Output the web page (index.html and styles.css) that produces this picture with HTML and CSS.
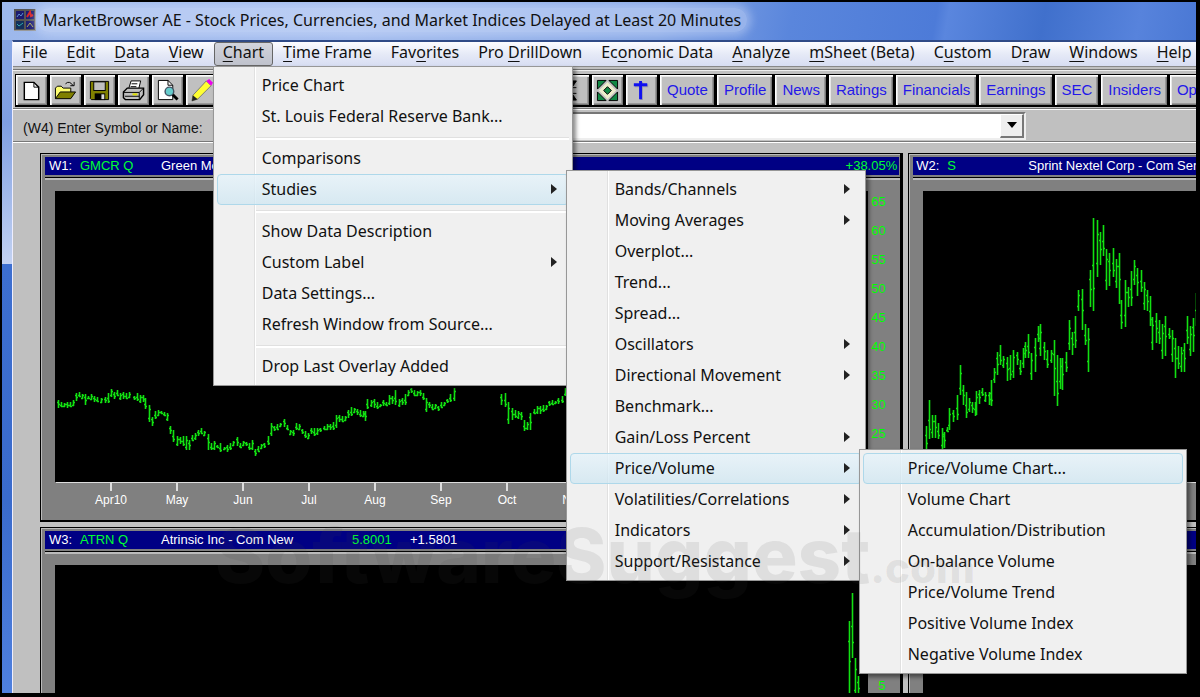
FILE: index.html
```
<!DOCTYPE html>
<html lang="en">
<head>
<meta charset="utf-8">
<title>MarketBrowser AE</title>
<link rel="stylesheet" href="styles.css">
</head>
<body>
<div class="app">
  <header class="titlebar">
    <svg class="app-icon" width="22" height="22" viewBox="0 0 22 22" aria-hidden="true">
      <rect width="22" height="22" fill="#555"/><path d="M0 21.500h22M21.500 0v22" stroke="#999"/>
      <rect x="2" y="2" width="8" height="8" fill="#1b1b70"/><rect x="12" y="2" width="8" height="8" fill="#1b1b70"/><rect x="2" y="12" width="8" height="8" fill="#12305c"/><rect x="12" y="12" width="8" height="8" fill="#1b1b70"/>
      <path d="M3 8l2-3 2 2 2-3" stroke="#5a90d0" fill="none"/><path d="M13 8l3-5 1 4 2-1" stroke="#d22" stroke-width="2" fill="none"/><path d="M3 15l2 2 4-3" stroke="#3aa" fill="none"/><path d="M13 18l3-4 3 4" stroke="#aa5" fill="none"/>
    </svg>
    <h1 class="title">MarketBrowser AE - Stock Prices, Currencies, and Market Indices Delayed at Least 20 Minutes</h1>
  </header>
  <div class="client">
    <nav class="menubar">
      <button class="top"><u>F</u>ile</button>
      <button class="top"><u>E</u>dit</button>
      <button class="top"><u>D</u>ata</button>
      <button class="top"><u>V</u>iew</button>
      <div class="drop">
        <button class="top open"><u>C</u>hart</button>
        <ul class="menu menu-chart">
          <li><button>Price Chart</button></li>
          <li><button>St. Louis Federal Reserve Bank...</button></li>
          <li class="sep"></li>
          <li><button>Comparisons</button></li>
          <li class="active"><button class="more">Studies</button>
            <ul class="menu menu-studies">
              <li><button class="more">Bands/Channels</button></li>
              <li><button class="more">Moving Averages</button></li>
              <li><button>Overplot...</button></li>
              <li><button>Trend...</button></li>
              <li><button>Spread...</button></li>
              <li><button class="more">Oscillators</button></li>
              <li><button class="more">Directional Movement</button></li>
              <li><button>Benchmark...</button></li>
              <li><button class="more">Gain/Loss Percent</button></li>
              <li class="active"><button class="more">Price/Volume</button>
                <ul class="menu menu-volume">
                  <li class="active"><button>Price/Volume Chart...</button></li>
                  <li><button>Volume Chart</button></li>
                  <li><button>Accumulation/Distribution</button></li>
                  <li><button>On-balance Volume</button></li>
                  <li><button>Price/Volume Trend</button></li>
                  <li><button>Positive Volume Index</button></li>
                  <li><button>Negative Volume Index</button></li>
                </ul>
              </li>
              <li><button class="more">Volatilities/Correlations</button></li>
              <li><button class="more">Indicators</button></li>
              <li><button class="more">Support/Resistance</button></li>
            </ul>
          </li>
          <li class="sep"></li>
          <li><button>Show Data Description</button></li>
          <li><button class="more">Custom Label</button></li>
          <li><button>Data Settings...</button></li>
          <li><button>Refresh Window from Source...</button></li>
          <li class="sep"></li>
          <li><button>Drop Last Overlay Added</button></li>
        </ul>
      </div>
      <button class="top"><u>T</u>ime Frame</button>
      <button class="top">Fav<u>o</u>rites</button>
      <button class="top">Pro <u>D</u>rillDown</button>
      <button class="top">Ec<u>o</u>nomic Data</button>
      <button class="top"><u>A</u>nalyze</button>
      <button class="top"><u>m</u>Sheet (Beta)</button>
      <button class="top">C<u>u</u>stom</button>
      <button class="top">D<u>r</u>aw</button>
      <button class="top"><u>W</u>indows</button>
      <button class="top"><u>H</u>elp</button>
    </nav>

    <div class="toolbar">
      <div class="tools">
        <button class="tool" aria-label="New"><svg viewBox="0 0 24 24"><path d="M4.500 3.500h10l5 5v13h-15z" fill="#fff" stroke="#000" stroke-width="1.500"/><path d="M14.500 3.500v5h5" fill="none" stroke="#000"/></svg></button>
        <button class="tool" aria-label="Open"><svg viewBox="0 0 24 24"><path d="M1.500 20.500v-11l2-2h4l2 2h8v4" fill="#ffff70" stroke="#000"/><path d="M1.500 20.500l5-7h16l-5 7z" fill="#808000" stroke="#000"/><path d="M12 5q4-4 8 2m1-4v4h-4" fill="none" stroke="#000"/></svg></button>
        <button class="tool" aria-label="Save"><svg viewBox="0 0 24 24"><path d="M2.500 2.500h19v19h-18l-1-1z" fill="#808000" stroke="#000"/><rect x="6" y="3" width="12" height="9" fill="#c0c0c0" stroke="#000"/><rect x="7" y="15" width="11" height="7" fill="#000"/><rect x="14" y="16" width="3" height="5" fill="#ddd"/></svg></button>
        <button class="tool" aria-label="Print"><svg viewBox="0 0 24 24"><path d="M7 10l2.500-8h10l-2 8" fill="#fff" stroke="#000"/><path d="M10 5h6M9 8h6" stroke="#000"/><path d="M1.500 13.500l4-4h17v7l-4 5h-15l-2-2z" fill="#c0c0c0" stroke="#000" stroke-width="1.500"/><path d="M2 14h16l4-4M18 14v7M3 18h15" stroke="#000" fill="none"/><path d="M11 16h5" stroke="#dd0" stroke-width="2"/></svg></button>
        <button class="tool" aria-label="Print preview"><svg viewBox="0 0 24 24"><path d="M2.500 1.500h10l5 5v15h-15z" fill="#fff" stroke="#000"/><path d="M12.500 1.500v5h5" fill="none" stroke="#000"/><circle cx="14" cy="13" r="4.500" fill="#6cc" stroke="#456" stroke-width="1.500"/><path d="M17.500 16.500l5 5" stroke="#000" stroke-width="3"/></svg></button>
        <button class="tool" aria-label="Edit"><svg viewBox="0 0 24 24"><path d="M3 17L17 2l5 5L8 21l-6 2z" fill="#ff3" stroke="#777"/><path d="M17 2l3-2 4 4-2 3z" fill="#e0e"/><path d="M3 17l5 4-6 2z" fill="#222"/></svg></button>
      </div>
      <div class="tools">
        <button class="tool" aria-label="Compress"><svg viewBox="0 0 24 24"><path d="M6 2h9l-4 6zM6 22h9l-4-6zM9 9h6M9 15h6" fill="#000" stroke="#000"/></svg></button>
        <button class="tool" aria-label="Expand"><svg viewBox="0 0 24 24"><path d="M1.500 1.500h9l-9 9zM22.500 1.500h-9l9 9zM1.500 22.500h9l-9-9zM22.500 22.500h-9l9-9z" fill="#184" stroke="#000"/><path d="M12 3L3 12l9 9 9-9z" fill="#eec"/><path d="M12 8l4 4-4 4-4-4z" fill="#184" stroke="#000"/></svg></button>
        <button class="tool" aria-label="Crosshair"><svg viewBox="0 0 24 24"><path d="M12 3v19M5 7h14" stroke="#99a" stroke-width="3"/><path d="M11 2v19M4 6h14" stroke="#1010f0" stroke-width="3"/></svg></button>
        <button class="tool text">Quote</button>
        <button class="tool text">Profile</button>
        <button class="tool text">News</button>
        <button class="tool text">Ratings</button>
        <button class="tool text">Financials</button>
        <button class="tool text">Earnings</button>
        <button class="tool text">SEC</button>
        <button class="tool text">Insiders</button>
        <button class="tool text">Options</button>
      </div>
    </div>

    <div class="prompt">
      <label for="symbol">(W4) Enter Symbol or Name:</label>
      <div class="combo"><input id="symbol" type="text"><button aria-label="Show list"></button></div>
    </div>

    <main class="workspace">
      <section class="pane">
        <header class="pane-title"><span>W1:</span><span class="green">GMCR Q</span><span>Green Mountain</span><span></span><span></span><span class="green">+38.05%</span></header>
        <div class="body">
          <div class="plot"><svg class="chart" data-chart="w1" data-x="55" data-y="191"></svg></div>
          <div class="scale"><span>65</span><span>60</span><span>55</span><span>50</span><span>45</span><span>40</span><span>35</span><span>30</span><span>25</span></div>
        </div>
        <footer class="months"><span>Apr10</span><span>May</span><span>Jun</span><span>Jul</span><span>Aug</span><span>Sep</span><span>Oct</span><span>Nov</span></footer>
      </section>
      <section class="pane">
        <header class="pane-title"><span>W2:</span><span class="green">S</span><span>Sprint Nextel Corp - Com Ser</span></header>
        <div class="body"><div class="plot"><svg class="chart" data-chart="w2" data-x="922" data-y="191"></svg></div></div>
        <footer class="months"></footer>
      </section>
      <section class="pane">
        <header class="pane-title"><span>W3:</span><span class="green">ATRN Q</span><span>Atrinsic Inc - Com New</span><span class="green">5.8001</span><span>+1.5801</span></header>
        <div class="body">
          <div class="plot"><svg class="chart" data-chart="w3" data-x="55" data-y="565"></svg></div>
          <div class="scale low"><span>5</span></div>
        </div>
      </section>
      <section class="pane">
        <header class="pane-title"><span>W4:</span></header>
        <div class="body"><div class="plot"></div></div>
      </section>
    </main>
  </div>
  <div class="watermark">SoftwareSuggest<small>.com</small></div>
</div>
<script src="chart.js"></script>
</body>
</html>
```
FILE: styles.css
```
* { box-sizing: border-box; }
body {
  margin: 0;
  height: 100vh;
  padding: 2px 4px 4px 2px;
  background: #000;
  font: 16px/24px "Noto Sans", "Open Sans", sans-serif;
  color: #111;
}
button { font: inherit; color: inherit; background: none; border: 0; padding: 0; margin: 0; }

.app {
  position: relative;
  height: 100%;
  overflow: hidden;
  display: flex;
  flex-direction: column;
  padding-left: 10px;
  background: linear-gradient(#8aa8e4 0, #7f9fe2 120px, #c3d2f2 262px, #3d6fd0 262px, #3a6bcc 500px, #4f80de 100%);
}
.titlebar {
  display: flex;
  align-items: center;
  gap: 8px;
  height: 38px;
  flex: none;
  margin-left: -10px;
  padding: 0 0 2px 12px;
  background: linear-gradient(100deg, #9db8ec 0, #a3bcee 30%, #86a7e6 55%, #5a86dc 66%, #4d7bd8 78%, #5a86de 79%, #4070cc 87%, #5783dc 95%, #4a78d4 100%);
}
.title {
  margin: 0;
  font-size: 16px;
  font-weight: 400;
  white-space: nowrap;
  padding: 0 6px;
  margin-left: -7px;
  border-radius: 12px;
  background: rgba(220, 230, 252, .4);
  box-shadow: 0 0 8px 4px rgba(220, 230, 252, .4);
}
.client {
  flex: 1;
  min-height: 0;
  display: flex;
  flex-direction: column;
  border-top: 2px solid #2f4a86;
  border-left: 1px solid #eef;
  background: #c0c0c0;
}

.menubar {
  display: flex;
  gap: 1px;
  height: 25px;
  flex: none;
  border-bottom: 1px solid #888;
  background: linear-gradient(#fcfcff, #e6eaf7 50%, #d7ddf2);
  white-space: nowrap;
}
.top { display: block; height: 24px; padding: 0 8px 3px; line-height: 19px; border: 1px solid transparent; }
.top u { text-underline-offset: 3px; }
.top.open { border-color: #666; border-radius: 3px; background: linear-gradient(#d2d4dc, #bfc2cc); }
.drop { position: relative; z-index: 10; }

.menu {
  position: absolute;
  list-style: none;
  margin: 0;
  padding: 3px;
  border: 1px solid #979797;
  background: linear-gradient(90deg, transparent 37px, #e0e0e0 37px, #e0e0e0 38px, #fff 38px, #fff 39px, transparent 39px) 3px 0 no-repeat, #f0f0f0;
  box-shadow: 3px 3px 4px rgba(0, 0, 0, .45);
}
.menu-chart { left: -1px; top: 100%; width: 360px; }
.menu .menu { left: calc(100% - 3px); top: -4px; z-index: 1; }
.menu-studies { width: 300px; }
.menu .menu-volume { width: 328px; }
.menu li { position: relative; height: 31px; }
.menu li > button {
  display: block;
  width: 100%;
  height: 31px;
  padding-left: 44px;
  line-height: 29px;
  text-align: left;
  border: 1px solid transparent;
  border-radius: 4px;
}
.menu li.active > button { border-color: #aed8ea; background: linear-gradient(rgba(230, 243, 250, .8), rgba(205, 230, 242, .7)); }
.menu li.sep { height: 11px; }
.menu li.sep::before { content: ""; position: absolute; left: 39px; right: 0; top: 5px; height: 2px; background: #fff; border-top: 1px solid #e0e0e0; }
.more::after {
  content: "";
  position: absolute;
  right: 12px;
  top: 10px;
  border: 5px solid transparent;
  border-left: 6px solid #222;
  border-right: 0;
}

.toolbar {
  display: flex;
  height: 40px;
  flex: none;
  margin-top: 2px;
  padding: 4px 0 0 2px;
  border-top: 1px solid #777;
  border-bottom: 1px solid #777;
  box-shadow: inset 0 1px #eee;
}
.tools { display: flex; flex: none; }
.tools + .tools { margin-left: 338px; }
.tool {
  flex: none;
  width: 34px;
  height: 33px;
  padding: 2px;
  border: 1px solid #000;
  border-width: 1px 2px 2px 1px;
  background: #c0c0c0;
  box-shadow: inset 1px 1px #fff, inset 2px 2px #e8e8e8, inset -1px -1px #777, inset -2px -2px #999;
}
.tool svg { display: block; width: 23px; height: 23px; margin: 0 auto; }
.tool.text { width: auto; padding: 0 6px 0 7px; font: 15px/28px "Liberation Sans", Arial, sans-serif; color: #2418e8; }

.prompt {
  display: flex;
  align-items: center;
  height: 33px;
  flex: none;
  padding-left: 10px;
  border-top: 1px solid #fff;
  border-bottom: 1px solid #777;
  font: 14px/20px "Liberation Sans", Arial, sans-serif;
}
.prompt label { width: 192px; padding-top: 4px; white-space: nowrap; }
.combo { display: flex; width: 811px; height: 28px; border: 2px solid #777; border-right-color: #eee; border-bottom-color: #eee; background: #fff; }
.combo input { flex: 1; min-width: 0; border: 0; padding: 0 4px; background: #fff; }
.combo button { width: 24px; background: #eee; border: 1px solid #fff; border-right: 2px solid #777; border-bottom: 2px solid #777; }
.combo button::before { content: ""; display: block; width: 0; margin: 0 auto; border: 5px solid transparent; border-top: 6px solid #000; border-bottom: 0; }

.workspace {
  flex: 1;
  min-height: 0;
  display: grid;
  grid-template: minmax(0, 20fr) minmax(0, 9fr) / minmax(0, 3fr) minmax(0, 1fr);
  gap: 5px;
  padding: 10px 0 0 27px;
  border-top: 1px solid #fff;
  font: 12px/18px "Liberation Sans", Arial, sans-serif;
  color: #fff;
}
.pane {
  display: flex;
  flex-direction: column;
  overflow: hidden;
  background: #808080;
  border: 1px solid #000;
  border-right-width: 3px;
  border-bottom-width: 2px;
  box-shadow: inset 1px 1px #bbb;
}
.pane:nth-child(2n) { border-right: 0; }
.pane:nth-child(n+3) { border-bottom: 0; }
.pane-title {
  display: grid;
  grid-template-columns: 31px 81px 191px 58px minmax(0, 1fr) auto;
  flex: none;
  height: 18px;
  margin: 3px 1px 0 4px;
  padding: 0 2px 0 4px;
  font-size: 13px;
  line-height: 18px;
  white-space: nowrap;
  background: #000084;
}
.pane-title + .body { position: relative; }
.pane-title + .body::before { content: ""; position: absolute; left: 4px; right: 0; top: 2px; height: 2px; border-top: 1px solid #000; background: #bbb; }
.green { color: #0f3; }
.body { flex: 1; min-height: 0; display: flex; padding: 16px 0 0 14px; }
.plot { flex: 1; min-width: 0; overflow: hidden; background: #000; }
.chart { display: block; width: 100%; height: 100%; }
.scale { width: 32px; display: flex; flex-direction: column; padding-left: 3px; margin-top: -4px; line-height: 29px; font-size: 13px; color: #0f0; }
.scale.low { justify-content: flex-end; padding-left: 10px; line-height: 14px; }
.pane:nth-child(2n) .pane-title { grid-template-columns: 31px 81px auto; margin-right: 0; padding: 0 0 0 3px; justify-content: start; }
.months { display: flex; flex: none; height: 38px; margin-left: 15px; padding-left: 22px; border-top: 1px solid #ddd; }
.months span { flex: none; width: 66px; text-align: center; }
.months span::before { content: ""; display: block; width: 2px; height: 8px; margin: 0 auto; background: #ddd; }

.watermark {
  position: absolute;
  left: 213px;
  top: 505px;
  z-index: 20;
  font: 800 76px/96px Inter, "Open Sans", sans-serif;
  color: rgba(70, 70, 70, .1);
  white-space: nowrap;
  pointer-events: none;
}
.watermark small { font-size: 42px; }
```
FILE: chart.js
```
// Each entry is x:high-low, in the shared coordinates of the window.
const series = {
  w1: "58:400-408 61:402-407 64:403-407 67:402-408 70:402-407 73:400-406 76:393-401 79:392-397 82:394-399 85:394-405 88:396-399 91:394-400 94:396-402 97:397-402 101:398-403 105:397-403 108:393-403 111:389-397 114:392-399 117:390-396 120:393-400 123:392-399 126:393-399 129:392-398 134:396-400 137:393-401 140:395-403 143:395-402 145:398-409 149:405-422 152:417-426 155:411-419 158:410-416 161:411-414 164:412-416 167:413-421 170:426-434 173:430-442 177:436-446 180:437-444 183:436-446 186:436-450 189:440-450 192:435-441 195:433-440 198:430-436 201:428-434 204:431-436 208:434-450 211:443-450 214:441-450 217:445-448 220:443-452 224:447-450 227:445-452 230:443-450 233:441-446 237:437-446 240:443-448 243:441-446 246:442-446 249:443-450 252:440-450 255:449-456 258:446-452 261:444-449 264:443-448 268:436-445 271:423-436 274:426-431 277:424-430 280:423-427 284:419-427 287:425-430 290:430-435 293:430-436 296:423-430 299:424-430 302:429-434 305:431-438 308:433-439 311:428-434 314:428-436 317:428-435 320:428-432 324:426-430 327:424-430 330:424-430 333:422-430 336:415-428 339:415-422 342:416-422 345:416-421 348:410-418 351:407-416 354:408-413 357:409-415 360:410-417 363:411-417 365:411-421 367:399-409 371:400-407 374:399-408 377:402-409 380:404-406 383:400-406 386:402-406 389:395-405 392:396-404 395:390-405 399:399-407 402:398-405 405:394-405 408:390-396 411:388-393 414:390-396 417:391-396 420:390-396 423:393-400 426:398-412 429:402-408 432:404-410 435:404-409 438:406-411 441:402-408 444:402-406 447:399-403 450:394-402 454:388-401 501:394-405 505:393-407 508:402-424 512:408-420 515:410-418 518:411-419 521:412-420 524:420-431 527:422-430 530:413-430 534:409-414 537:406-414 540:406-414 543:405-412 546:405-410 549:401-406 552:400-405 555:401-404 558:398-404 562:396-403 565:388-396",
  w2: "925:426-460 928:400-439 931:415-438 934:415-438 937:423-439 941:428-450 943:432-448 946:427-432 948:408-430 952:410-422 956:395-420 959:365-395 962:385-405 965:392-418 968:398-412 971:402-413 974:402-416 975:391-415 978:390-404 981:388-396 984:392-402 988:392-405 990:380-406 993:368-383 996:352-375 999:345-365 1002:356-368 1006:357-381 1009:355-380 1012:350-378 1016:352-365 1019:360-375 1022:348-368 1024:342-358 1027:334-358 1030:353-380 1034:338-372 1037:326-342 1039:324-356 1043:342-360 1046:350-368 1050:350-363 1053:340-396 1056:355-406 1059:358-389 1061:358-390 1065:352-372 1068:320-350 1071:332-355 1074:316-348 1077:290-311 1081:289-330 1084:324-345 1087:328-372 1089:270-307 1092:218-311 1096:220-277 1099:232-265 1102:225-256 1105:249-290 1108:253-286 1112:248-277 1115:259-288 1118:253-304 1120:300-329 1124:280-327 1127:287-307 1130:271-306 1133:260-285 1136:268-296 1140:270-292 1143:282-310 1146:290-311 1149:296-326 1151:317-350 1155:313-343 1158:320-344 1161:324-359 1164:316-356 1168:328-339 1171:330-362 1174:338-378 1177:346-369 1180:347-372 1183:343-372 1186:316-344 1189:326-356 1192:318-352 1195:293-326",
  w3: "849:621-700 852:593-658 855:658-700 858:676-700"
};

for (const svg of document.querySelectorAll("[data-chart]")) {
  const x0 = +svg.dataset.x, y0 = +svg.dataset.y;
  let d = "";
  series[svg.dataset.chart].split(" ").forEach((bar, i) => {
    const [x, hi, lo] = bar.split(/[:-]/).map(Number);
    const h = lo - hi;
    const open = hi + Math.round(h * (i % 3 + 1) / 4);
    const close = hi + Math.round(h * ((i + 1) % 3 + 1) / 4);
    d += `M${x - x0 + .5} ${hi - y0}v${h}M${x - x0 - 1} ${open - y0 + .5}h2M${x - x0} ${close - y0 + .5}h2`;
  });
  const path = document.createElementNS("http://www.w3.org/2000/svg", "path");
  path.setAttribute("d", d);
  path.setAttribute("fill", "none");
  path.setAttribute("stroke", "#12e012");
  path.setAttribute("stroke-width", "1.6");
  svg.append(path);
}
```
